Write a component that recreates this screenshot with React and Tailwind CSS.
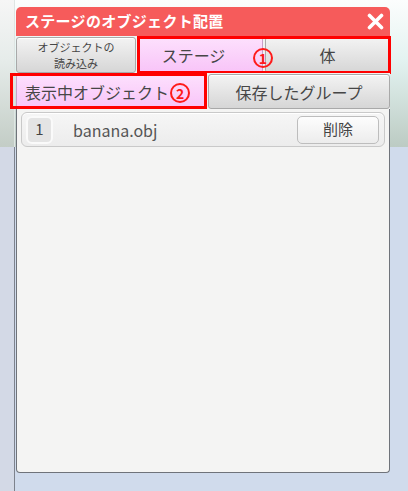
import React from "react";

const font = { fontFamily: '"Noto Sans CJK JP", "Noto Sans", sans-serif' };

const grayBtn =
  "flex items-center justify-center rounded-[3px] border border-[#a9a9a9] bg-[linear-gradient(#f3f3f3,#d6d6d6)] text-[#464646] shadow-[inset_0_1px_0_#fff]";
const pinkBtn =
  "flex items-center justify-center rounded-[3px] border border-[#c9a0c9] bg-[linear-gradient(#fde0fd,#f8c4f8)] text-[#464646] shadow-[inset_0_1px_0_#fff]";

const Circled = ({ n }) => (
  <span className="inline-flex h-[20px] w-[20px] items-center justify-center rounded-full border-[2px] border-[#ff1a1a] text-[14px] font-bold leading-none text-[#ff1a1a]">
    {n}
  </span>
);

export default function App() {
  return (
    <div
      className="relative h-[491px] w-[408px] overflow-hidden bg-[linear-gradient(#fcfdfd_0px,#e3f3f1_60px,#bccbc3_147px,#d0dbec_147px)]"
      style={font}
    >
      {/* left page edge */}
      <div className="absolute left-0 top-0 h-[147px] w-[15px] bg-[linear-gradient(#f6f6f6,#e6ecea_60px,#c3cdc6)] border-r border-[#dfe5e3]" />
      <div className="absolute left-0 top-[147px] h-[344px] w-[15px] bg-[#d3d9e6] border-r border-[#7d828c]" />

      <div className="relative ml-[16px] mt-[7px] flex h-[466px] w-[374px] flex-col">
        {/* header */}
        <div className="flex h-[29px] items-center justify-between rounded-t-[5px] bg-[#f65b5b] pl-[9px] pr-[6px]">
          <span className="text-[15px] font-bold tracking-[0.3px] text-white">
            ステージのオブジェクト配置
          </span>
          <svg width="17" height="17" viewBox="0 0 17 17">
            <path d="M2.5 2.5 L14.5 14.5 M14.5 2.5 L2.5 14.5" stroke="#fff" strokeWidth="3.6" strokeLinecap="round" />
          </svg>
        </div>

        {/* row 1 */}
        <div className="relative mt-[1px] flex h-[36px] gap-[2px] bg-[#f2f2f2]">
          <div className={`${grayBtn} w-[120px] flex-col text-[11px] leading-[16px]`}>
            <span>オブジェクトの</span>
            <span>読み込み</span>
          </div>
          <div className={`${pinkBtn} relative flex-1 text-[16px]`}>
            <span className="mr-[14px]">ステージ</span>
          </div>
          <div className={`${grayBtn} flex-1 text-[16px]`}>体</div>
          <div className="pointer-events-none absolute left-[121px] top-[-1px] h-[38px] w-[254px] border-[3px] border-[#ff0000]" />
          <div className="absolute left-[237px] top-[8px]">
            <Circled n="1" />
          </div>
        </div>

        {/* row 2 */}
        <div className="relative flex h-[36px] gap-[3px] bg-[#f2f2f2] pt-[1px]">
          <div className={`${pinkBtn} w-[189px] justify-start pl-[8px] text-[16px]`}>
            <span>表示中オブジェクト</span>
            <span className="ml-[1px]">
              <Circled n="2" />
            </span>
          </div>
          <div className={`${grayBtn} flex-1 text-[16px]`}>保存したグループ</div>
          <div className="pointer-events-none absolute left-[-6px] top-[0px] h-[36px] w-[197px] border-[3px] border-[#ff0000]" />
        </div>

        {/* list */}
        <div className="flex-1 rounded-b-[4px] border border-t-0 border-[#6f737a] bg-[#f4f4f3] px-[4px] pt-[3px]">
          <div className="flex h-[35px] items-center rounded-[6px] border border-[#c9c9c9] bg-[linear-gradient(#f6f6f6,#ececec)] pl-[4px] pr-[5px] shadow-[inset_0_1px_0_#fff]">
            <div className="flex h-[28px] w-[27px] items-center justify-center rounded-[6px] border-[2px] border-[#fafafa] bg-[#e4e4e4] text-[15px] text-[#444]">
              1
            </div>
            <span className="ml-[20px] text-[16px] text-[#555]">banana.obj</span>
            <div className="ml-auto flex h-[28px] w-[82px] items-center justify-center rounded-[5px] border border-[#bdbdbd] bg-[linear-gradient(#fdfdfd,#ececec)] text-[15px] text-[#444]">
              削除
            </div>
          </div>
        </div>
      </div>
    </div>
  );
}
